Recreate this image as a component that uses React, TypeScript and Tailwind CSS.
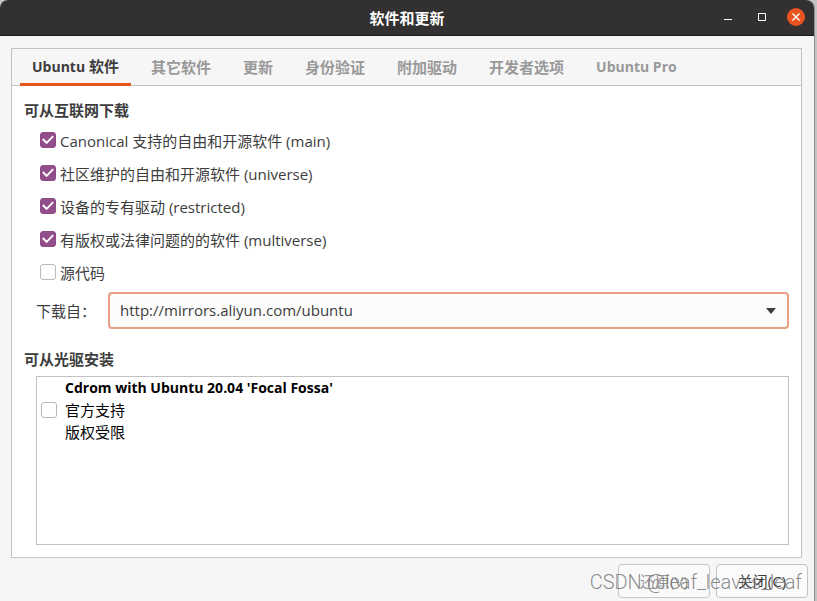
import { useState } from 'react';

type Source = {
  id: string;
  label: string;
  enabled: boolean;
};

type Tab = {
  id: string;
  latin?: string;
  label?: string;
};

const TABS: Tab[] = [
  { id: 'ubuntu', latin: 'Ubuntu', label: ' 软件' },
  { id: 'other', label: '其它软件' },
  { id: 'updates', label: '更新' },
  { id: 'auth', label: '身份验证' },
  { id: 'drivers', label: '附加驱动' },
  { id: 'developer', label: '开发者选项' },
  { id: 'pro', latin: 'Ubuntu Pro' },
];

const INITIAL_SOURCES: Source[] = [
  { id: 'main', label: 'Canonical 支持的自由和开源软件 (main)', enabled: true },
  { id: 'universe', label: '社区维护的自由和开源软件 (universe)', enabled: true },
  { id: 'restricted', label: '设备的专有驱动 (restricted)', enabled: true },
  { id: 'multiverse', label: '有版权或法律问题的的软件 (multiverse)', enabled: true },
  { id: 'source', label: '源代码', enabled: false },
];

type CheckBoxProps = {
  id: string;
  checked: boolean;
  onChange: () => void;
};

function CheckBox({ id, checked, onChange }: CheckBoxProps) {
  return (
    <span className="relative flex size-4 shrink-0">
      <input
        id={id}
        type="checkbox"
        checked={checked}
        onChange={onChange}
        className="size-4 appearance-none rounded-[3px] border border-[#b8b8b8] bg-white checked:border-[#8a4a83] checked:bg-[#924d8b]"
      />
      {checked && (
        <svg viewBox="0 0 16 16" className="pointer-events-none absolute inset-0 size-4" aria-hidden="true">
          <path d="M2.8 7 6.6 10.8 13.2 4.2" fill="none" stroke="#fff" strokeWidth="1.9" />
        </svg>
      )}
    </span>
  );
}

function TitleBar() {
  return (
    <header className="grid h-9 grid-cols-[1fr_auto_1fr] items-center rounded-t-lg border-b border-[#1c1b1b] bg-[#323030] text-white">
      <span />
      <h1 className="text-[15px] leading-5 font-bold">软件和更新</h1>
      <div className="flex justify-end pr-px pb-px">
        <button type="button" aria-label="最小化" className="flex h-8 w-[34px] items-center justify-center">
          <svg viewBox="0 0 18 18" className="size-[18px]">
            <path d="M5 11h8v1H5z" fill="#fff" />
          </svg>
        </button>
        <button type="button" aria-label="最大化" className="flex h-8 w-[34px] items-center justify-center">
          <svg viewBox="0 0 18 18" className="size-[18px]">
            <path d="M5.5 5.5h7v7h-7z" fill="none" stroke="#fff" />
          </svg>
        </button>
        <button type="button" aria-label="关闭窗口" className="flex h-8 w-[34px] items-center justify-center">
          <svg viewBox="0 0 18 18" className="size-[18px]">
            <circle cx="9" cy="9" r="9" fill="#e95420" />
            <path d="m5.5 5.5 7 7m0-7-7 7" stroke="#fff" strokeWidth="1.4" />
          </svg>
        </button>
      </div>
    </header>
  );
}

export default function App() {
  const [activeTab, setActiveTab] = useState('ubuntu');
  const [sources, setSources] = useState(INITIAL_SOURCES);
  const [cdrom, setCdrom] = useState(false);

  const toggleSource = (id: string) => {
    setSources((prev) => prev.map((s) => (s.id === id ? { ...s, enabled: !s.enabled } : s)));
  };

  return (
    <div className="flex min-h-screen bg-[#c4c4c4] pr-[2px] font-['Open_Sans','Noto_Sans_CJK_SC',sans-serif] text-[15px] leading-5 text-[#3d3d3d]">
      <div className="flex min-w-0 flex-1 flex-col rounded-t-lg border-r border-[#8f8f8f] bg-[#f6f6f6]">
        <TitleBar />

        <main className="mt-3 mr-3 ml-[11px] flex flex-1 flex-col border border-[#c2c2c2] bg-white">
          <div role="tablist" className="flex h-[37px] gap-2 border-b border-[#c2c2c2] bg-[#f6f6f6] px-2">
            {TABS.map((tab) => (
              <button
                key={tab.id}
                type="button"
                role="tab"
                aria-selected={tab.id === activeTab}
                onClick={() => setActiveTab(tab.id)}
                className={`-mb-px border-b-[3px] px-3 pt-px font-bold whitespace-nowrap ${
                  tab.id === activeTab ? 'border-[#e95420] text-[#3d3d3d]' : 'border-transparent text-[#999]'
                }`}
              >
                {tab.latin && <span className="text-sm">{tab.latin}</span>}
                {tab.label}
              </button>
            ))}
          </div>

          <div className="flex flex-1 flex-col p-3">
            <h2 className="pt-[2px] font-bold">可从互联网下载</h2>

            <div className="mt-[3px] pl-4">
              {sources.map((source) => (
                <div key={source.id} className="flex h-[33px] items-center gap-1">
                  <CheckBox id={source.id} checked={source.enabled} onChange={() => toggleSource(source.id)} />
                  <label htmlFor={source.id} className="pt-[3px]">
                    {source.label}
                  </label>
                </div>
              ))}
            </div>

            <div className="mt-1 flex items-center pl-3">
              <label htmlFor="mirror" className="w-[72px] shrink-0">
                下载自：
              </label>
              <div className="relative flex-1">
                <select
                  id="mirror"
                  className="block h-[37px] w-full appearance-none rounded border-2 border-[#e99f84] bg-[#fcfcfc] px-[10px] pb-[2px] outline-none"
                >
                  <option>http://mirrors.aliyun.com/ubuntu</option>
                </select>
                <svg viewBox="0 0 10 6" className="pointer-events-none absolute top-4 right-[13px] h-[6px] w-[10px]">
                  <path d="M0 0h10L5 6z" fill="#3d3d3d" />
                </svg>
              </div>
            </div>

            <h2 className="mt-5 font-bold">可从光驱安装</h2>

            <div className="mt-[7px] ml-3 flex-1 border border-[#c2c2c2] bg-white px-1 text-black">
              <div className="flex items-center gap-2">
                <CheckBox id="cdrom" checked={cdrom} onChange={() => setCdrom(!cdrom)} />
                <label htmlFor="cdrom" className="leading-[22px]">
                  <span className="block text-sm leading-[22px] font-bold">Cdrom with Ubuntu 20.04 'Focal Fossa'</span>
                  <span className="block">官方支持</span>
                  <span className="block">版权受限</span>
                </label>
              </div>
            </div>
          </div>
        </main>

        <footer className="relative flex justify-end gap-[6px] pt-[6px] pr-[6px] pb-[3px]">
          <button
            type="button"
            disabled
            className="h-[34px] w-[92px] rounded border border-[#c8c8c8] bg-[#fafafa] text-[#999]"
          >
            还原(V)
          </button>
          <button type="button" className="h-[34px] w-[92px] rounded border border-[#c2c2c2] bg-[#fbfbfb]">
            关闭(C)
          </button>
          <span className="pointer-events-none absolute right-3 bottom-[7px] font-['Roboto',sans-serif] text-[20px] leading-6 font-light text-[#6e6e6e]/80">
            CSDN @leaf_leaves_leaf
          </span>
        </footer>
      </div>
    </div>
  );
}
